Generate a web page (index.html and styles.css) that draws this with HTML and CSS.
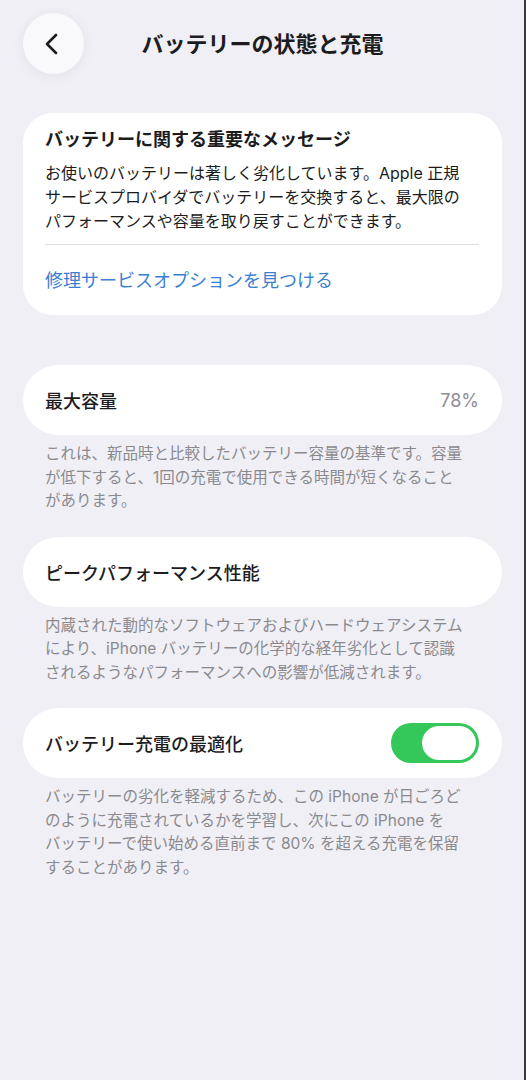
FILE: index.html
```html
<!DOCTYPE html>
<html>
    <head>
        <meta charset="utf-8">
        <title>バッテリーの状態と充電</title>
        <link rel="stylesheet" href="styles.css">
    </head>
    <body>
        <div class="page">
            <!-- header -->
            <div class="header">
                <div class="back">
                    <svg width="20" height="22" viewBox="0 0 20 22">
                        <path d="M13 2 L4 11 L13 20" fill="none" stroke="#1c1c1e" stroke-width="2.6" stroke-linecap="round" stroke-linejoin="round"/>
                    </svg>
                </div>
                <h1 class="title">バッテリーの状態と充電</h1>
                <div></div>
            </div>

            <!-- message card -->
            <div class="card message">
                <h2>バッテリーに関する重要なメッセージ</h2>
                <p>お使いのバッテリーは著しく劣化しています。Apple 正規<br>サービスプロバイダでバッテリーを交換すると、最大限の<br>パフォーマンスや容量を取り戻すことができます。</p>
                <div class="divider"></div>
                <div class="link">修理サービスオプションを見つける</div>
            </div>

            <div class="card row first">
                <span>最大容量</span>
                <span class="value">78%</span>
            </div>
            <p class="note">これは、新品時と比較したバッテリー容量の基準です。容量<br>が低下すると、1回の充電で使用できる時間が短くなること<br>があります。</p>

            <div class="card row">
                <span>ピークパフォーマンス性能</span>
            </div>
            <p class="note">内蔵された動的なソフトウェアおよびハードウェアシステム<br>により、iPhone バッテリーの化学的な経年劣化として認識<br>されるようなパフォーマンスへの影響が低減されます。</p>

            <div class="card row">
                <span>バッテリー充電の最適化</span>
                <span class="toggle"><span class="knob"></span></span>
            </div>
            <p class="note">バッテリーの劣化を軽減するため、この iPhone が日ごろど<br>のように充電されているかを学習し、次にこの iPhone を<br>バッテリーで使い始める直前まで 80% を超える充電を保留<br>することがあります。</p>
        </div>
    </body>
</html>
```

FILE: styles.css
```css
body {
    margin: 0;
    background-color: #f0eff5;
    font-family: "Inter", "Noto Sans CJK JP", sans-serif;
    color: #1c1c1e;
}
.page {
    min-height: 1080px;
    box-sizing: border-box;
    padding: 13px 22px 40px 23px;
    border-right: 2px solid #3a3a3c;
}
.header {
    display: grid;
    grid-template-columns: 61px 1fr 61px;
    align-items: center;
}
.back {
    width: 61px;
    height: 61px;
    border-radius: 50%;
    background-color: #f9f9fb;
    box-shadow: 0 2px 14px rgba(0, 0, 0, 0.06);
    display: flex;
    align-items: center;
    justify-content: center;
}
.back svg {
    margin-left: -2px;
}
.title {
    margin: 0;
    text-align: center;
    font-size: 22px;
    font-weight: 700;
    line-height: 28px;
}
.card {
    background-color: #ffffff;
    border-radius: 30px;
}
.message {
    margin-top: 39px;
    padding: 15px 23px 22px 22px;
}
.message h2 {
    margin: 0;
    font-size: 18px;
    font-weight: 700;
    line-height: 24px;
}
.message p {
    margin: 9px 0 0 0;
    font-size: 16px;
    line-height: 24px;
    white-space: nowrap;
}
.divider {
    height: 1px;
    background-color: #dedee2;
    margin-top: 11px;
}
.link {
    margin-top: 24px;
    font-size: 18px;
    line-height: 24px;
    color: #3a7fd0;
}
.row {
    height: 70px;
    border-radius: 35px;
    margin-top: 24px;
    padding: 0 23px 0 22px;
    display: flex;
    align-items: center;
    justify-content: space-between;
    font-size: 18px;
    font-weight: 500;
}
.row.first {
    margin-top: 50px;
}
.value {
    color: #8e8e93;
    font-weight: 400;
}
.note {
    margin: 7px 0 0 0;
    padding-left: 22px;
    font-size: 15.5px;
    line-height: 23.5px;
    color: #8a8a8e;
    white-space: nowrap;
}
.toggle {
    width: 88px;
    height: 40px;
    box-sizing: border-box;
    border-radius: 20px;
    background-color: #34c759;
    padding: 3px;
    display: flex;
    justify-content: flex-end;
}
.knob {
    width: 54px;
    height: 34px;
    border-radius: 17px;
    background-color: #ffffff;
}
```
